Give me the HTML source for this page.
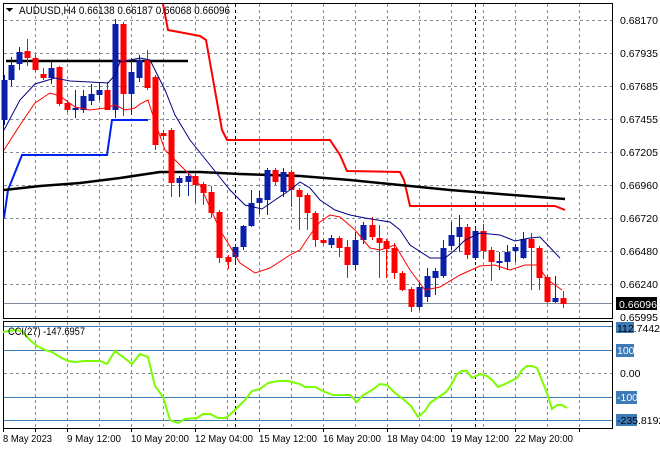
<!DOCTYPE html>
<html><head><meta charset="utf-8"><style>
body{margin:0;background:#fff;width:660px;height:450px;overflow:hidden}
svg{display:block}
text{font-family:"Liberation Sans",sans-serif;font-size:10.5px;fill:#000}
</style></head><body>
<svg width="660" height="450" viewBox="0 0 660 450" xmlns="http://www.w3.org/2000/svg" shape-rendering="crispEdges">
<rect width="660" height="450" fill="#fff"/>
<g stroke="#7f8b98" stroke-dasharray="3,3" stroke-width="1">
<path d="M35.5 4V318M67.5 4V318M99.5 4V318M131.5 4V318M163.5 4V318M195.5 4V318M227.5 4V318M259.5 4V318M291.5 4V318M323.5 4V318M355.5 4V318M387.5 4V318M419.5 4V318M451.5 4V318M483.5 4V318M515.5 4V318M547.5 4V318M579.5 4V318"/>
<path d="M35.5 322V428M67.5 322V428M99.5 322V428M131.5 322V428M163.5 322V428M195.5 322V428M227.5 322V428M259.5 322V428M291.5 322V428M323.5 322V428M355.5 322V428M387.5 322V428M419.5 322V428M451.5 322V428M483.5 322V428M515.5 322V428M547.5 322V428M579.5 322V428"/>
<path d="M4 20.5H612M4 53.5H612M4 86.5H612M4 119.5H612M4 152.5H612M4 185.5H612M4 218.5H612M4 251.5H612M4 284.5H612M4 373.5H612"/>
</g>
<g stroke="#000" stroke-dasharray="3,3"><path d="M235.5 4V318M475.5 4V318M235.5 322V428M475.5 322V428"/></g>
<line x1="4" y1="303.5" x2="612" y2="303.5" stroke="#7f8b98"/>
<g stroke="#3d7ab8"><path d="M4 326.5H612M4 350.5H612M4 397.5H612M4 420.5H612"/></g>
<rect x="3.5" y="3.5" width="609" height="315" fill="none" stroke="#000"/>
<rect x="3.5" y="321.5" width="609" height="107" fill="none" stroke="#000"/>
<polyline shape-rendering="auto" fill="none" stroke="#000" stroke-width="2.5" points="6,61 188,61"/>
<polyline shape-rendering="auto" fill="none" stroke="#0022ee" stroke-width="2" points="4,218 8,190 22,155 107,155 112,120 148,120"/>
<polyline shape-rendering="auto" fill="none" stroke="#f00" stroke-width="2" points="163,4 168,30 200,36 206,40 222,130 227,140 330,140 340,155 347,171 400,172 404,180 410,206 555,206 565,210"/>
<polyline shape-rendering="auto" fill="none" stroke="#000" stroke-width="2.5" points="4,190 40,186 80,183 120,178 160,172 200,172 240,174 300,176 350,180 400,185 450,190 500,194 565,199"/>
<g id="c"></g>
<polyline shape-rendering="auto" fill="none" stroke="#000080" stroke-width="1" points="4,130 20,100 35,84 55,78 70,81 90,82 108,83 115,75 120,62 140,58 150,60 165,90 175,115 190,140 210,165 230,190 245,205 262,209 275,200 290,190 300,182 310,188 320,200 335,210 350,215 365,218 390,222 400,230 410,245 430,258 445,258 455,250 465,240 480,233 500,235 515,241 530,238 540,237 560,258"/>
<polyline shape-rendering="auto" fill="none" stroke="#f00" stroke-width="1" points="4,150 20,125 35,103 50,93 60,96 75,107 90,110 105,108 115,105 125,110 135,108 140,104 148,100 155,122 165,150 180,165 200,185 220,230 240,263 255,273 270,268 290,255 300,250 310,235 320,222 330,215 340,217 355,230 370,248 380,250 395,245 410,270 425,290 440,287 460,275 480,266 495,265 510,270 525,265 537,265 548,280 562,290"/>
<polyline shape-rendering="auto" fill="none" stroke="#7cfc00" stroke-width="2" points="3,332 15,330 22,331 30,340 37,346 45,350 52,352 60,357 68,361 75,362 85,361 100,361 107,364 115,351 123,357 132,364 140,354 148,357 155,386 163,397 170,420 178,423 185,419 197,418 203,414 210,414 218,418 226,418 235,410 245,400 252,391 260,389 268,383 278,381 288,381 300,384 305,387 315,387 325,392 333,395 350,395 357,402 362,396 372,390 380,384 387,385 395,393 403,399 411,406 418,417 425,411 430,403 437,398 445,393 450,387 457,374 462,371 467,371 472,378 480,374 487,376 492,380 498,387 505,384 517,378 522,370 527,366 532,366 537,368 543,383 548,396 552,409 557,405 562,405 567,408"/>
<path d="M6 8h7l-3.5 4z" fill="#000"/>
<text x="19" y="14" style="font-size:11px" textLength="211" lengthAdjust="spacingAndGlyphs">AUDUSD,H4  0.66138 0.66187 0.66068 0.66096</text>
<text x="8" y="335" style="font-size:11px" textLength="77" lengthAdjust="spacingAndGlyphs">CCI(27) -147.6957</text>
<g>
<text x="620" y="24">0.68170</text><text x="620" y="57">0.67935</text><text x="620" y="90">0.67685</text><text x="620" y="123">0.67455</text><text x="620" y="156">0.67205</text><text x="620" y="189">0.66960</text><text x="620" y="222">0.66720</text><text x="620" y="255">0.66480</text><text x="620" y="288">0.66240</text><text x="620" y="321">0.65995</text>
<rect x="616" y="297" width="41" height="13" fill="#000"/><text x="619" y="308" style="fill:#fff">0.66096</text>
<rect x="616" y="322" width="18" height="11" fill="#3d7ab8"/><text x="617" y="332">112.7442</text>
<rect x="616" y="344" width="18" height="13" fill="#3d7ab8"/><text x="617" y="354" style="fill:#fff">100</text>
<text x="620" y="377">0.00</text>
<rect x="616" y="391" width="21" height="13" fill="#3d7ab8"/><text x="617" y="401" style="fill:#fff">-100</text>
<rect x="616" y="414" width="21" height="12" fill="#3d7ab8"/><text x="617" y="424">-235.8192</text>
</g>
<g>
<text x="3" y="442" textLength="49" lengthAdjust="spacingAndGlyphs">8 May 2023</text>
<text x="67" y="442" textLength="54" lengthAdjust="spacingAndGlyphs">9 May 12:00</text>
<text x="131" y="442" textLength="58" lengthAdjust="spacingAndGlyphs">10 May 20:00</text>
<text x="195" y="442" textLength="58" lengthAdjust="spacingAndGlyphs">12 May 04:00</text>
<text x="259" y="442" textLength="58" lengthAdjust="spacingAndGlyphs">15 May 12:00</text>
<text x="323" y="442" textLength="58" lengthAdjust="spacingAndGlyphs">16 May 20:00</text>
<text x="387" y="442" textLength="58" lengthAdjust="spacingAndGlyphs">18 May 04:00</text>
<text x="451" y="442" textLength="58" lengthAdjust="spacingAndGlyphs">19 May 12:00</text>
<text x="515" y="442" textLength="58" lengthAdjust="spacingAndGlyphs">22 May 20:00</text>
</g>
<g stroke="#000"><path d="M3.5 428V432M35.5 428V432M67.5 428V432M131.5 428V432M195.5 428V432M259.5 428V432M323.5 428V432M387.5 428V432M451.5 428V432M515.5 428V432M579.5 428V432"/></g>
</svg>
<script>
var d=[
[4,'b',80,120,75,125],[11,'b',65,80,57,86],[19,'b',52,64,47,70],[27,'r',51,58,39,66],[35,'r',58,70,55,72],[43,'r',74,78,68,80],[51,'b',68,78,62,84],[59,'r',67,104,66,106],[67,'r',103,110,100,112],[75,'b',108,110,90,118],[83,'b',96,110,90,113],[91,'b',94,101,84,105],[99,'b',90,95,83,100],[107,'r',90,110,82,110],[115,'b',24,110,19,118],[123,'r',24,94,22,116],[131,'b',72,94,58,115],[139,'b',60,78,55,82],[147,'r',60,88,50,90],[155,'r',77,145,75,150],[163,'r',133,136,130,140],[171,'r',130,183,128,197],[179,'b',178,183,176,197],[188,'b',176,182,172,196],[195,'r',176,185,174,203],[203,'r',184,193,182,205],[211,'r',192,213,186,218],[219,'r',212,258,210,263],[228,'r',257,262,255,269],[235,'b',247,257,244,263],[243,'b',226,247,225,250],[251,'b',203,226,190,227],[259,'b',198,203,191,214],[267,'b',170,200,168,215],[275,'r',170,182,168,185],[283,'b',172,192,168,197],[291,'r',172,190,170,207],[299,'r',190,197,188,230],[307,'r',195,213,193,230],[315,'r',213,240,211,247],[323,'r',240,243,238,245],[331,'b',238,245,235,248],[339,'r',238,248,236,257],[347,'r',247,265,240,278],[355,'b',240,265,232,270],[363,'b',225,240,222,244],[372,'r',225,237,217,240],[379,'r',238,243,225,278],[386,'r',241,249,239,278],[394,'r',248,273,243,279],[402,'r',273,290,271,291],[411,'r',289,307,287,312],[419,'b',287,307,282,310],[427,'b',276,297,268,302],[435,'b',271,278,268,295],[443,'b',248,276,240,278],[451,'b',235,246,222,250],[459,'b',227,237,215,252],[467,'r',227,255,224,259],[475,'b',231,258,228,260],[483,'r',231,251,224,259],[491,'r',250,262,247,281],[499,'b',261,263,252,270],[507,'b',252,262,245,270],[515,'b',247,251,244,262],[523,'b',239,258,232,259],[531,'r',239,248,233,290],[539,'r',248,278,246,290],[547,'r',277,302,275,303],[555,'b',298,302,276,303],[563,'r',298,304,291,308]];
var s='';d.forEach(function(c){var col=c[1]=='b'?'#0a1ea8':'#f00';s+='<rect x="'+c[0]+'" y="'+c[4]+'" width="1" height="'+(c[5]-c[4])+'" fill="'+col+'"/><rect x="'+(c[0]-2.5)+'" y="'+c[2]+'" width="6" height="'+Math.max(2,c[3]-c[2])+'" fill="'+col+'"/>';});
document.getElementById('c').innerHTML=s;
</script>
</body></html>
